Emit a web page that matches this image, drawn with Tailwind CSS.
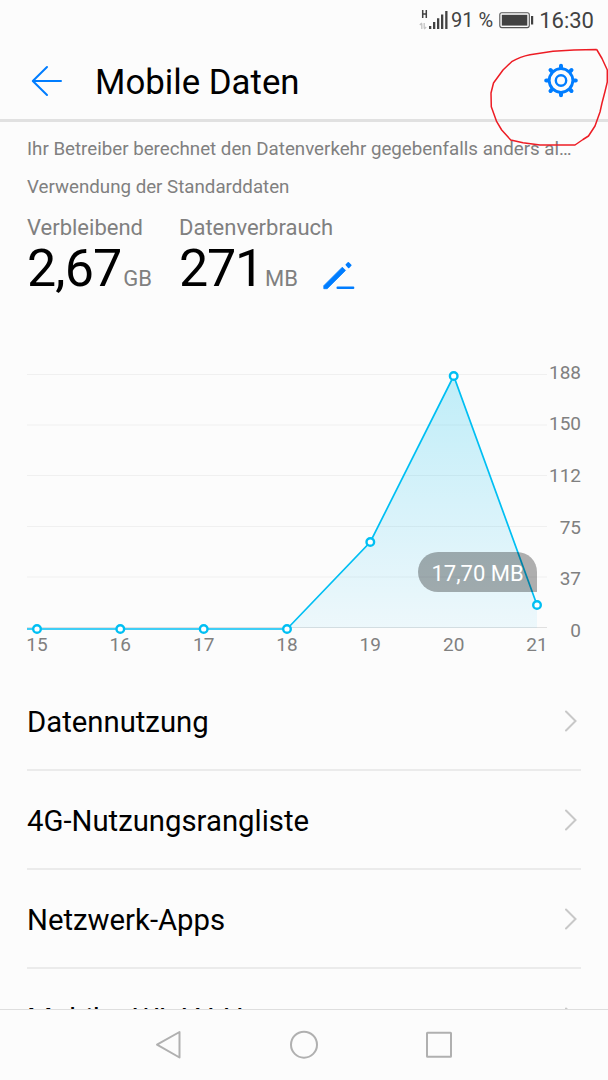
<!DOCTYPE html>
<html lang="de">
<head>
    <meta charset="UTF-8">
    <meta name="viewport" content="width=device-width, initial-scale=1.0">
    <title>Mobile Daten</title>
    <script src="https://cdn.jsdelivr.net/npm/@tailwindcss/browser@4"></script>
</head>
<body class="bg-[#fcfcfc] font-[Roboto,sans-serif] text-black">
<div class="relative flex h-[1080px] w-[608px] flex-col overflow-hidden">

    <!-- Status bar -->
    <div class="flex h-10 shrink-0 items-center justify-end pr-3.5 text-[#424242]">
        <svg class="mr-px h-6 w-[31px]" viewBox="0 0 31 24" fill="#424242">
            <path d="M3.7 2v8M7.3 2v8M3.7 6h3.6" stroke="#424242" stroke-width="1.5" fill="none"/>
            <path d="M2.8 21v-5.5M0.8 17l2-2M5.2 15v5.5M7.2 19l-2 2" stroke="#c4c4c4" stroke-width="1.3" fill="none"/>
            <path d="M10 18h2.3v3H10zM14 14h2.3v7H14zM18 10.3h2.3v10.7H18zM22 6.5h2.3v14.5H22zM26.2 3h2.3v18h-2.3z"/>
        </svg>
        <span class="text-[20px] leading-6">91 %</span>
        <svg class="ml-[5px] h-6 w-9" viewBox="-1 0 36 24">
            <rect x="0.8" y="4.8" width="29.5" height="14.8" rx="2" fill="none" stroke="#555" stroke-width="1.1"/>
            <rect x="2.8" y="6.8" width="25.5" height="10.8" fill="#424242"/>
            <rect x="32" y="8" width="2.2" height="8.5" fill="#424242"/>
        </svg>
        <span class="ml-[5px] pt-0.5 text-[22px] leading-6">16:30</span>
    </div>

    <!-- Header -->
    <div class="flex h-[82px] shrink-0 items-center border-b-[3px] border-[#e1e1e1] pt-0.5 pr-[29px] pl-[31px]">
        <svg class="h-8 w-8" viewBox="0 0 32 32" fill="none" stroke="#007dff" stroke-width="2" stroke-linecap="round" stroke-linejoin="round">
            <path d="M30 16H2M16 2L1.8 16L16 30"/>
        </svg>
        <h1 class="ml-8 pt-[3px] text-[34.8px] leading-10">Mobile Daten</h1>
        <svg class="ml-auto h-9 w-9" viewBox="-18 -17.5 36 36" fill="none" stroke="#007dff">
            <circle r="11.8" stroke-width="2.8"/>
            <circle r="5.2" stroke-width="2.4"/>
            <path d="M0-13v-1.8M0 13v1.8M-13 0h-1.8M13 0h1.8M9.2-9.2l1.3-1.3M9.2 9.2l1.3 1.3M-9.2-9.2l-1.3-1.3M-9.2 9.2l-1.3 1.3" stroke-width="4" stroke-linecap="round"/>
        </svg>
    </div>

    <!-- Usage -->
    <div class="h-[218px] shrink-0 px-[27px] pt-[14px] text-[#808080]">
        <p class="text-[18.73px] leading-[26px] whitespace-nowrap">Ihr Betreiber berechnet den Datenverkehr gegebenfalls anders al…</p>
        <p class="mt-3 text-[18.73px] leading-[26px]">Verwendung der Standarddaten</p>
        <div class="mt-[14px] flex">
            <div class="w-[152px]">
                <div class="text-[22px] leading-7">Verbleibend</div>
                <div class="flex items-baseline leading-[54px]"><span class="text-[52px] tracking-[-0.9px] text-black">2,67</span><span class="ml-0.5 text-[22px]">GB</span></div>
            </div>
            <div>
                <div class="text-[22px] leading-7">Datenverbrauch</div>
                <div class="flex items-baseline leading-[54px]">
                    <span class="text-[52px] tracking-[-1.2px] text-black">271</span><span class="ml-0.5 text-[22px]">MB</span>
                    <svg class="mb-[13px] ml-[25px] h-8 w-8 self-end" viewBox="0 0 32 32" fill="#007dff">
                        <path d="M0.8 27.7v-3L19.3 6.2l3.2 3.2L4.2 27.7z" stroke="#007dff" stroke-width="0.8" stroke-linejoin="round"/>
                        <path d="M23.3 3.8l2-2 2.5 2.5-2.1 2.1z" stroke="#007dff" stroke-width="1.6" stroke-linejoin="round"/>
                        <rect x="13.5" y="25.5" width="17.8" height="2.5" rx="1"/>
                    </svg>
                </div>
            </div>
        </div>
    </div>

    <!-- Chart -->
    <svg class="h-[332px] w-[608px] shrink-0" viewBox="0 340 608 332">
        <defs>
            <linearGradient id="area" x1="0" y1="376" x2="0" y2="628" gradientUnits="userSpaceOnUse">
                <stop offset="0" stop-color="#00c0ec" stop-opacity="0.24"/>
                <stop offset="1" stop-color="#00b4f0" stop-opacity="0.06"/>
            </linearGradient>
        </defs>
        <path d="M27 374.5H547M27 425H547M27 475.5H547M27 526.5H547M27 577H547" stroke="#f0f0f0"/>
        <path d="M27 627.5H547" stroke="#e0e0e0"/>
        <path d="M287 628L370.3 542L453.7 376L537 605V628z" fill="url(#area)"/>
        <path d="M27 629H287L370.3 542L453.7 376L537 605" fill="none" stroke="#00bff3" stroke-width="1.7"/>
        <g fill="#fff" stroke="#00bff3" stroke-width="2.4">
            <circle cx="37" cy="629" r="3.8"/>
            <circle cx="120.3" cy="629" r="3.8"/>
            <circle cx="203.7" cy="629" r="3.8"/>
            <circle cx="287" cy="629" r="3.8"/>
            <circle cx="370.3" cy="542" r="3.8"/>
            <circle cx="453.7" cy="376" r="3.8"/>
            <circle cx="537" cy="605" r="3.8"/>
        </g>
        <g class="text-[19px]" fill="#808080" text-anchor="end">
            <text x="581" y="379">188</text>
            <text x="581" y="430">150</text>
            <text x="581" y="482">112</text>
            <text x="581" y="534">75</text>
            <text x="581" y="585">37</text>
            <text x="581" y="637">0</text>
        </g>
        <g class="text-[19px]" fill="#808080" text-anchor="middle">
            <text x="37" y="651">15</text>
            <text x="120.3" y="651">16</text>
            <text x="203.7" y="651">17</text>
            <text x="287" y="651">18</text>
            <text x="370.3" y="651">19</text>
            <text x="453.7" y="651">20</text>
            <text x="537" y="651">21</text>
        </g>
        <path d="M438 552H517A20 20 0 0 1 537 572V592H438A20 20 0 0 1 438 552z" fill="#000" fill-opacity="0.31"/>
        <text class="text-[22px]" x="431.5" y="580.5" fill="#fff">17,70 MB</text>
    </svg>

    <!-- Menu -->
    <div class="min-h-0 grow overflow-hidden px-[27px] text-[29.3px]">
        <div class="flex h-[99px] items-center justify-between border-b-2 border-[#ebebeb]">
            <span class="pt-[5px]">Datennutzung</span>
            <svg class="mr-1 h-6 w-3" viewBox="0 0 12 24" fill="none" stroke="#c8c8c8" stroke-width="2" stroke-linecap="round"><path d="M1 2.5L10.5 12L1 21.5"/></svg>
        </div>
        <div class="flex h-[99px] items-center justify-between border-b-2 border-[#ebebeb]">
            <span class="pt-[5px]">4G-Nutzungsrangliste</span>
            <svg class="mr-1 h-6 w-3" viewBox="0 0 12 24" fill="none" stroke="#c8c8c8" stroke-width="2" stroke-linecap="round"><path d="M1 2.5L10.5 12L1 21.5"/></svg>
        </div>
        <div class="flex h-[99px] items-center justify-between border-b-2 border-[#ebebeb]">
            <span class="pt-[5px]">Netzwerk-Apps</span>
            <svg class="mr-1 h-6 w-3" viewBox="0 0 12 24" fill="none" stroke="#c8c8c8" stroke-width="2" stroke-linecap="round"><path d="M1 2.5L10.5 12L1 21.5"/></svg>
        </div>
        <div class="flex h-[99px] items-center justify-between border-b-2 border-[#ebebeb]">
            <span class="pt-[5px]">Mobiler WLAN-Hotspot</span>
            <svg class="mr-1 h-6 w-3" viewBox="0 0 12 24" fill="none" stroke="#c8c8c8" stroke-width="2" stroke-linecap="round"><path d="M1 2.5L10.5 12L1 21.5"/></svg>
        </div>
    </div>

    <!-- Navigation bar -->
    <div class="flex h-[71px] shrink-0 items-center justify-center gap-[105px] border-t border-[#dedede]">
        <svg class="h-[30px] w-[30px]" viewBox="0 0 30 30" fill="none" stroke="#b0b0b0" stroke-width="2" stroke-linejoin="round"><path d="M25.5 2V27.5L3 14.7z"/></svg>
        <svg class="h-[30px] w-[30px]" viewBox="0 0 30 30" fill="none" stroke="#b0b0b0" stroke-width="2"><circle cx="15" cy="14.7" r="13"/></svg>
        <svg class="h-[30px] w-[30px]" viewBox="0 0 30 30" fill="none" stroke="#b0b0b0" stroke-width="2"><rect x="3" y="2.7" width="24" height="24" rx="0.5"/></svg>
    </div>

    <!-- Pen mark around the settings icon -->
    <svg class="pointer-events-none absolute top-10 right-0 h-[120px] w-32" viewBox="480 40 128 120" fill="none" stroke="#ed1c24" stroke-width="1.5" stroke-linejoin="round">
        <path d="M596.7 49.5L574 50L553 51.2L530 54.7C523 56 517 58.5 511.7 61.7L503 70L493.5 83L491 93L491.3 106.7L496.7 121.7L501.7 130L510.7 140L523 142.7L540 145H575L583 139.5L588.5 136L595 126L600 112L602 103L605 91.5L607.3 82L607.3 70L602 58.5L596.7 49.5"/>
    </svg>
</div>
</body>
</html>
